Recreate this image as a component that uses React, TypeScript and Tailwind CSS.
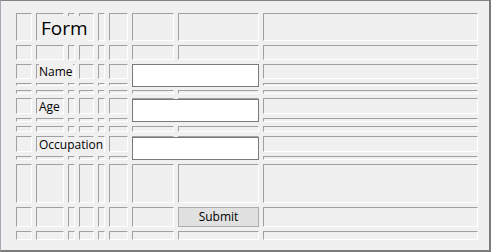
import React from 'react';

const COLS = 9;
const ROWS = 13;

const cells = Array.from({ length: COLS * ROWS }, (_, i) => ({
  col: (i % COLS) + 1,
  row: Math.floor(i / COLS) + 1,
}));

const font = { fontFamily: '"Open Sans", "Noto Sans", sans-serif' };

export default function App() {
  return (
    <div
      className="w-[491px] h-[252px] bg-[#f0f0f0] border-t border-l border-r-2 border-b-2 border-t-[#828282] border-l-[#a3a8b3] border-r-[#7b7b7b] border-b-[#7b7b7b] pl-[15px] pt-[12px] text-black"
      style={font}
    >
      <div className="grid grid-cols-[16px_28px_7px_15px_7px_19px_42px_81px_215px] grid-rows-[28px_15px_15px_3px_4px_16px_4px_6px_16px_4px_39px_20px_9px] gap-[4px] w-max">
        {/* Inset cell borders */}
        {cells.map((c) => (
          <div
            key={`${c.col}-${c.row}`}
            className="border-t border-l border-t-[#a0a0a0] border-l-[#a0a0a0] border-b border-r border-b-white border-r-white"
            style={{ gridColumn: c.col, gridRow: c.row }}
          />
        ))}

        {/* Title */}
        <div className="col-start-2 row-start-1 justify-self-start self-start mt-[3px] ml-[5px] bg-[#f0f0f0] whitespace-nowrap text-[19px] leading-[25px]">
          Form
        </div>

        {/* Labels */}
        <div className="col-start-2 row-start-3 justify-self-start self-start ml-[3px] bg-[#f0f0f0] whitespace-nowrap text-[12px] leading-[16px]">
          Name
        </div>
        <div className="col-start-2 row-start-6 justify-self-start self-start ml-[3px] mt-[1px] bg-[#f0f0f0] whitespace-nowrap text-[12px] leading-[16px]">
          Age
        </div>
        <div className="col-start-2 row-start-9 justify-self-start self-start ml-[3px] mt-[1px] bg-[#f0f0f0] whitespace-nowrap text-[12px] leading-[16px]">
          Occupation
        </div>

        {/* Text boxes */}
        <div className="col-start-7 col-span-2 row-start-3 row-span-2 self-start h-[23px] bg-white border border-[#7a7a7a]" />
        <div className="col-start-7 col-span-2 row-start-6 row-span-2 self-start mt-[1px] h-[23px] bg-white border border-[#7a7a7a]" />
        <div className="col-start-7 col-span-2 row-start-9 row-span-2 self-start mt-[1px] h-[23px] bg-white border border-[#7a7a7a]" />

        {/* Submit */}
        <button className="col-start-8 row-start-12 h-[20px] bg-[#e1e1e1] border border-[#adadad] flex items-center justify-center text-[12px] leading-[16px] text-black">
          Submit
        </button>
      </div>
    </div>
  );
}
